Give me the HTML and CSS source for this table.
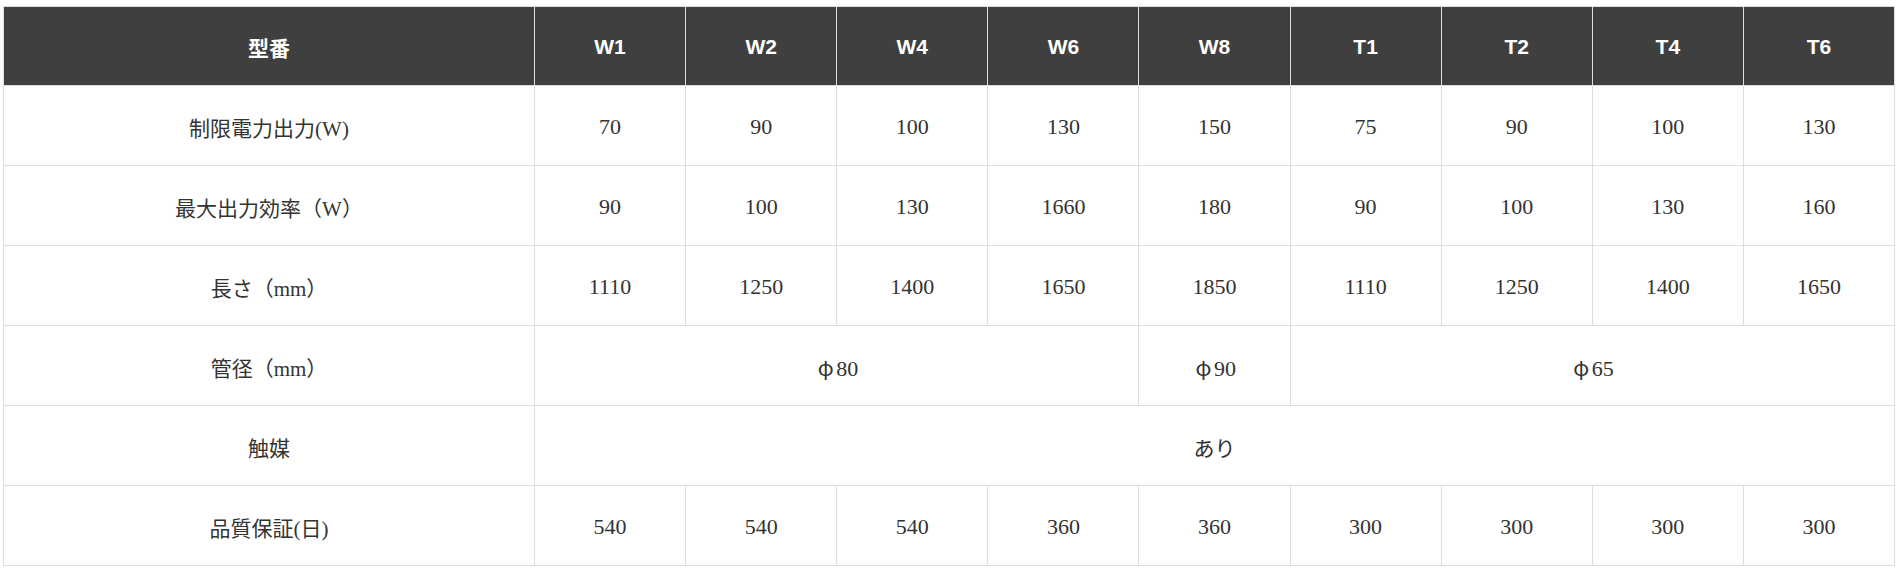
FILE: index.html
```html
<!DOCTYPE html>
<html lang="ja">
<head>
<meta charset="utf-8">
<title>仕様表</title>
<link rel="stylesheet" href="styles.css">
</head>
<body>
<div class="wrap">
<table class="spec">
  <colgroup>
    <col class="c-label">
    <col span="9">
  </colgroup>
  <thead>
    <tr>
      <th>型番</th><th>W1</th><th>W2</th><th>W4</th><th>W6</th><th>W8</th><th>T1</th><th>T2</th><th>T4</th><th>T6</th>
    </tr>
  </thead>
  <tbody>
    <tr>
      <td class="label">制限電力出力(W)</td><td>70</td><td>90</td><td>100</td><td>130</td><td>150</td><td>75</td><td>90</td><td>100</td><td>130</td>
    </tr>
    <tr>
      <td class="label">最大出力効率（W）</td><td>90</td><td>100</td><td>130</td><td>1660</td><td>180</td><td>90</td><td>100</td><td>130</td><td>160</td>
    </tr>
    <tr>
      <td class="label">長さ（mm）</td><td>1110</td><td>1250</td><td>1400</td><td>1650</td><td>1850</td><td>1110</td><td>1250</td><td>1400</td><td>1650</td>
    </tr>
    <tr>
      <td class="label">管径（mm）</td><td colspan="4"><span class="phi">φ</span>80</td><td><span class="phi">φ</span>90</td><td colspan="4"><span class="phi">φ</span>65</td>
    </tr>
    <tr>
      <td class="label">触媒</td><td colspan="9" class="label">あり</td>
    </tr>
    <tr>
      <td class="label">品質保証(日)</td><td>540</td><td>540</td><td>540</td><td>360</td><td>360</td><td>300</td><td>300</td><td>300</td><td>300</td>
    </tr>
  </tbody>
</table>
</div>
</body>
</html>
```

FILE: styles.css
```css
html, body {
  margin: 0;
  padding: 0;
  background: #ffffff;
}

.wrap {
  padding: 6px 0 0 3px;
}

.spec {
  width: 1892px;
  border-collapse: collapse;
  table-layout: fixed;
  font-family: "Liberation Serif", "Noto Sans CJK JP", serif;
  color: #333333;
}

.c-label {
  width: 531px;
}

.spec th,
.spec td {
  border: 1px solid #dddddd;
  text-align: center;
  vertical-align: middle;
  padding: 2px 0 0 0;
}

.spec th {
  height: 76px;
  background: #3f3f3f;
  color: #ffffff;
  font-family: "Liberation Sans", "Noto Sans CJK JP", sans-serif;
  font-weight: bold;
  font-size: 21px;
}

.spec td {
  height: 77px;
  font-size: 22px;
}

.spec td.label {
  font-size: 21px;
}

.phi {
  display: inline-block;
  width: 1em;
  font-family: "Noto Sans CJK JP", sans-serif;
  font-size: 21px;
  text-align: center;
}
```
